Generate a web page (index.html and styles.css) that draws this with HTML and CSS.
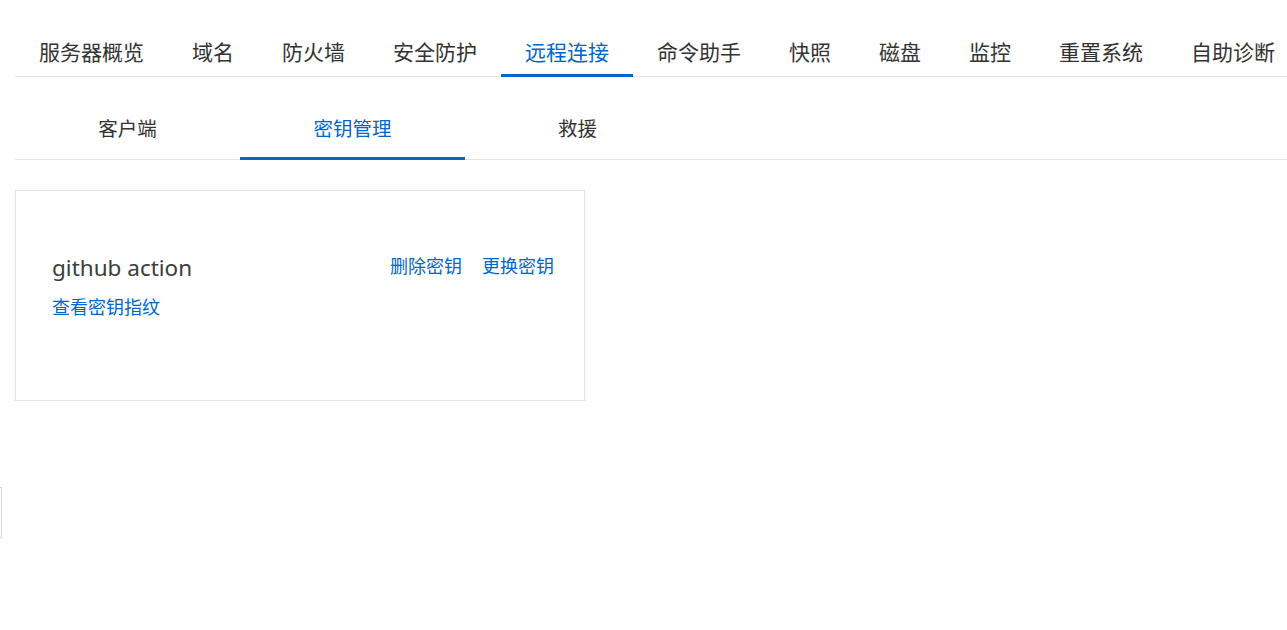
FILE: index.html
```html
<!DOCTYPE html>
<html lang="zh-CN">
<head>
	<meta charset="UTF-8" />
	<title>远程连接 - 密钥管理</title>
	<link rel="stylesheet" href="styles.css">
</head>
<body>
	<div class="page">
		<div class="tabs">
			<a class="tab">服务器概览</a>
			<a class="tab">域名</a>
			<a class="tab">防火墙</a>
			<a class="tab">安全防护</a>
			<a class="tab active">远程连接</a>
			<a class="tab">命令助手</a>
			<a class="tab">快照</a>
			<a class="tab">磁盘</a>
			<a class="tab">监控</a>
			<a class="tab">重置系统</a>
			<a class="tab">自助诊断</a>
		</div>

		<div class="subtabs">
			<a class="subtab">客户端</a>
			<a class="subtab active">密钥管理</a>
			<a class="subtab">救援</a>
		</div>

		<div class="card">
			<div class="card-head">
				<div class="key-name">github action</div>
				<div class="ops">
					<a class="link">删除密钥</a>
					<a class="link">更换密钥</a>
				</div>
			</div>
			<a class="link fingerprint">查看密钥指纹</a>
		</div>
	</div>
	<div class="edge"></div>
</body>
</html>
```

FILE: styles.css
```css
body {
	margin: 0;
	font-family: "Noto Sans", "Noto Sans CJK SC", sans-serif;
	color: #333;
	background: #fff;
}

.page {
	padding: 24px 0 0 15px;
}

.tabs {
	display: flex;
	border-bottom: 1px solid #e5e5e5;
}

.tab {
	font-family: "Noto Sans CJK SC", sans-serif;
	font-size: 21px;
	line-height: 30px;
	padding: 12px 24px 8px;
	border-bottom: 3px solid transparent;
	margin-bottom: -1px;
	color: #333;
	white-space: nowrap;
	cursor: pointer;
}

.tab.active {
	color: #0066cc;
	border-bottom-color: #0066cc;
}

.subtabs {
	display: flex;
	border-bottom: 1px solid #e5e5e5;
}

.subtab {
	width: 225px;
	text-align: center;
	font-family: "Noto Sans CJK SC", sans-serif;
	font-size: 19.5px;
	line-height: 28px;
	padding: 37px 0 15px;
	border-bottom: 3px solid transparent;
	margin-bottom: -1px;
	color: #333;
	cursor: pointer;
}

.subtab.active {
	color: #0066cc;
	border-bottom-color: #0066cc;
}

.card {
	box-sizing: border-box;
	width: 570px;
	height: 211px;
	margin-top: 30px;
	padding: 62px 30px 0 36px;
	border: 1px solid #e5e5e5;
	box-shadow: 0 1px 3px rgba(0, 0, 0, 0.08);
}

.card-head {
	display: flex;
	justify-content: space-between;
	align-items: flex-start;
}

.key-name {
	font-size: 22.5px;
	line-height: 30px;
	color: #3d3d3d;
}

.ops {
	display: flex;
	gap: 20px;
}

.link {
	font-family: "Noto Sans CJK SC", sans-serif;
	font-size: 18px;
	line-height: 24px;
	color: #0066cc;
	cursor: pointer;
}

.fingerprint {
	display: inline-block;
	margin-top: 11px;
}

.edge {
	position: absolute;
	left: 0;
	top: 487px;
	width: 1px;
	height: 49px;
	border: 1px solid #d5d5d5;
	border-left: none;
}
```
